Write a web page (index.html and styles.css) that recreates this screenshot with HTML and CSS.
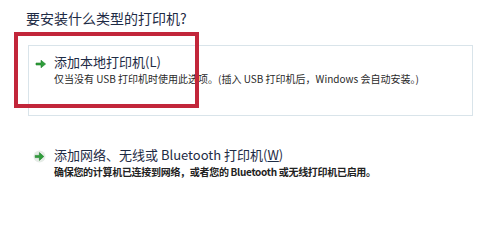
FILE: index.html
```html
<!DOCTYPE html>
<html lang="zh-CN">
<head>
<meta charset="utf-8">
<link rel="stylesheet" href="styles.css">
</head>
<body>
<div class="page">
  <h1 class="title">要安装什么类型的打印机?</h1>
  <div class="option option-boxed">
    <div class="row">
      <svg class="arrow" width="12" height="10" viewBox="0 0 12 10">
        <path d="M1 4 H6 V1.2 L10.6 5 L6 8.8 V6 H1 Z" fill="#2e9e3a" stroke="#1f7f2a" stroke-width="0.6" stroke-linejoin="round"/>
      </svg>
      <div class="texts">
        <div class="opt-title">添加本地打印机(L)</div>
        <div class="opt-desc">仅当没有 USB 打印机时使用此选项。(插入 USB 打印机后，Windows 会自动安装。)</div>
      </div>
    </div>
  </div>
  <div class="option option-plain">
    <div class="row">
      <svg class="arrow arrow-round" width="13" height="13" viewBox="0 0 13 13">
        <circle cx="6.5" cy="6.5" r="6" fill="#e6ece7"/>
        <path d="M2.2 5.4 H6.4 V2.6 L10.8 6.5 L6.4 10.4 V7.6 H2.2 Z" fill="#2e9e3a" stroke="#1f7f2a" stroke-width="0.6" stroke-linejoin="round"/>
      </svg>
      <div class="texts">
        <div class="opt-title">添加网络、无线或 Bluetooth 打印机(<span class="u">W</span>)</div>
        <div class="opt-desc opt-desc-bold">确保您的计算机已连接到网络，或者您的 Bluetooth 或无线打印机已启用。</div>
      </div>
    </div>
  </div>
  <div class="highlight"></div>
</div>
</body>
</html>
```

FILE: styles.css
```css
html, body {
  margin: 0;
  padding: 0;
  background: #ffffff;
}

body {
  font-family: "Noto Sans CJK SC", "Noto Sans", sans-serif;
  width: 484px;
  height: 225px;
  overflow: hidden;
}

.page {
  position: relative;
  padding: 8px 0 0 26px;
}

.title {
  margin: 0;
  font-size: 14px;
  line-height: 21px;
  font-weight: normal;
  color: #1e2b45;
}

.option {
  margin-left: 2px;
  width: 445px;
  box-sizing: border-box;
}

.option-boxed {
  margin-top: 16px;
  height: 71px;
  border: 1px solid #d9e4ea;
  padding: 6px 0 0 6px;
}

.option-plain {
  margin-top: 29px;
  padding: 0 0 0 5px;
}

.row {
  display: flex;
  align-items: flex-start;
}

.arrow {
  flex: none;
  margin-top: 7px;
  margin-right: 7px;
}

.arrow-round {
  margin-top: 5px;
  margin-right: 8px;
}

.texts {
  display: flex;
  flex-direction: column;
}

.opt-title {
  font-size: 13px;
  line-height: 19px;
  color: #1e2b45;
}

.opt-desc {
  font-size: 10px;
  line-height: 15px;
  color: #2a2a2a;
}

.opt-desc-bold {
  font-weight: bold;
  letter-spacing: -0.3px;
  color: #222;
}

.u {
  text-decoration: underline;
}

.highlight {
  position: absolute;
  left: 14px;
  top: 32px;
  width: 177px;
  height: 68px;
  border: 4px solid #c2263a;
}
```
